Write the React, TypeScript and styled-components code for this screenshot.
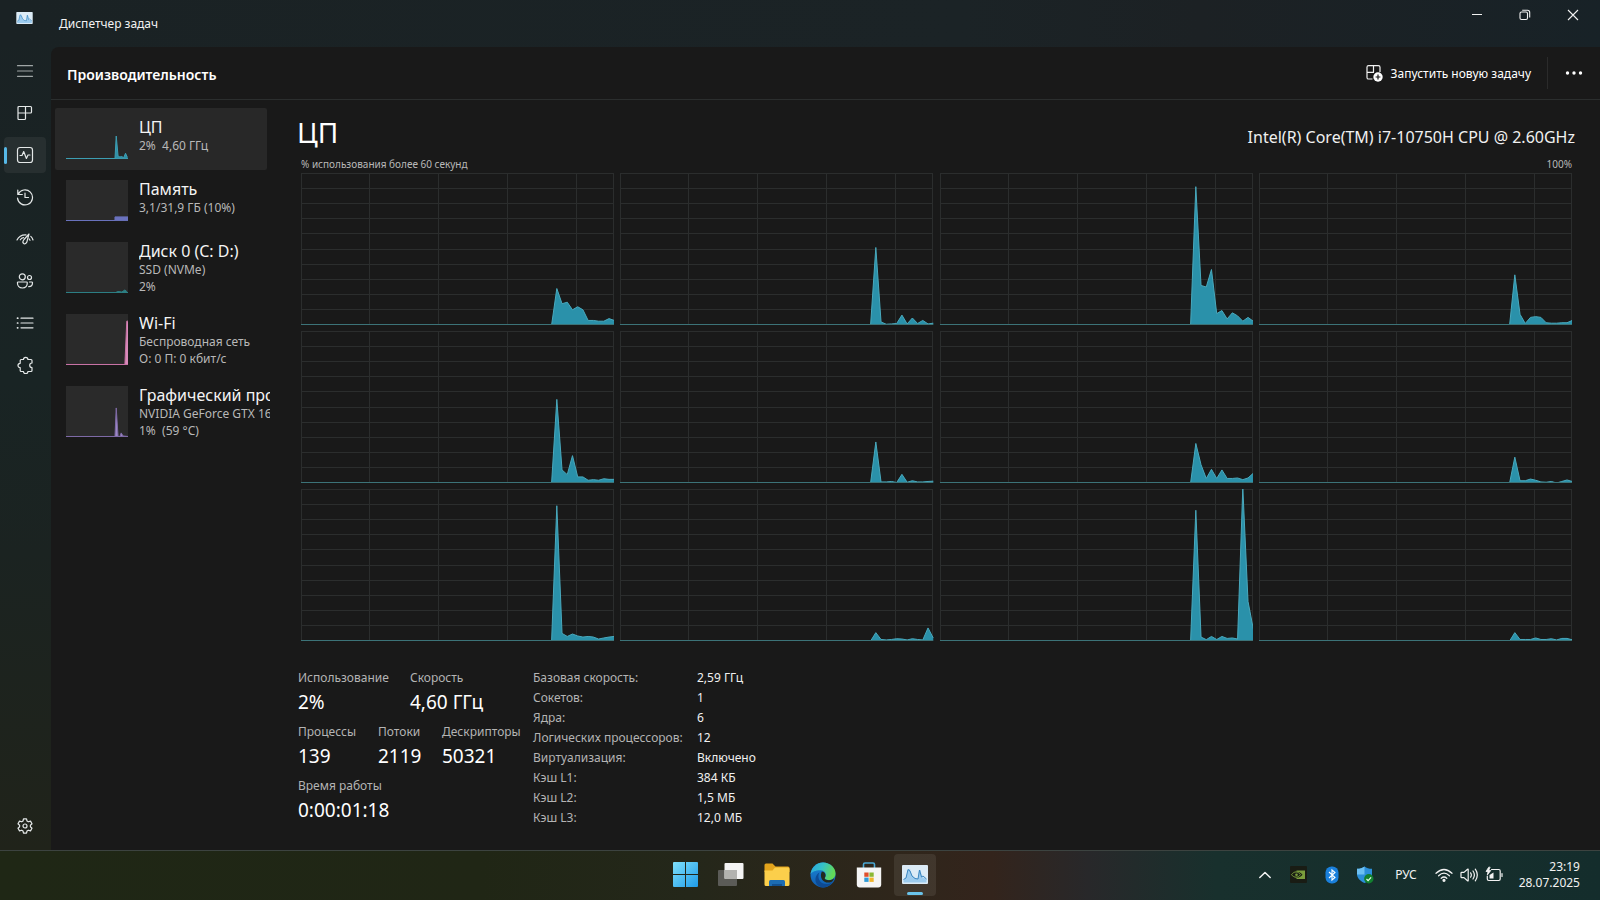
import React, { ReactNode } from 'react';
import styled, { createGlobalStyle } from 'styled-components';

const GlobalStyle = createGlobalStyle`
  * { box-sizing: border-box; }
  body {
    margin: 0;
    background: #191919;
    color: #f2f2f2;
    font-family: 'Noto Sans', 'Open Sans', sans-serif;
    font-size: 12px;
  }
  button {
    margin: 0;
    padding: 0;
    border: 0;
    background: none;
    color: inherit;
    font: inherit;
    text-align: left;
  }
  svg { display: block; }
  h1, h2, p, dl, dd, ul { margin: 0; padding: 0; font-weight: 400; }
  ul { list-style: none; }
`;

/* ---------- window frame ---------- */

const Desktop = styled.div`
  display: flex;
  flex-direction: column;
  min-height: 100vh;
`;

const Window = styled.div`
  flex: 1;
  display: flex;
  flex-direction: column;
  background:
    linear-gradient(90deg, #1a2224 0%, #1b2326 60%, #1c2124 75%, #182227 100%) top / 100% 47px no-repeat,
    linear-gradient(180deg, #1a2224 0%, #192424 45%, #1b2321 65%, #20231a 100%);
`;

const TitleBar = styled.header`
  display: flex;
  align-items: flex-start;
  height: 47px;
  padding: 0 3px 0 16px;
`;

const TitleIcon = styled.span`
  width: 43px;
  padding-top: 12px;
`;

const TitleText = styled.span`
  flex: 1;
  line-height: 20px;
  padding-top: 14px;
`;

const CaptionButton = styled.button`
  display: grid;
  place-items: center;
  width: 48px;
  height: 30px;
`;

const Body = styled.div`
  flex: 1;
  display: flex;
`;

const Rail = styled.nav`
  display: flex;
  flex-direction: column;
  gap: 6px;
  width: 51px;
  padding: 6px 5px 6px 4px;
`;

const RailButton = styled.button<{ $active?: boolean; $last?: boolean }>`
  position: relative;
  display: grid;
  place-items: center;
  height: 36px;
  border-radius: 4px;
  color: #e4e8e8;
  background: ${p => (p.$active ? '#272f30' : 'transparent')};
  margin-top: ${p => (p.$last ? 'auto' : '0')};
  &::before {
    content: '';
    display: ${p => (p.$active ? 'block' : 'none')};
    position: absolute;
    left: 0;
    top: 10px;
    width: 3px;
    height: 17px;
    border-radius: 2px;
    background: #56b8e6;
  }
`;

const Panel = styled.main`
  flex: 1;
  min-width: 0;
  background: #191919;
  border-top-left-radius: 8px;
`;

const PanelHeader = styled.div`
  display: flex;
  align-items: center;
  height: 53px;
  padding: 0 16px;
  border-bottom: 1px solid #2b2e2e;
`;

const PanelTitle = styled.h1`
  flex: 1;
  padding-top: 3px;
  font-size: 14px;
  font-weight: 600;
  line-height: 20px;
  color: #fff;
`;

const RunButton = styled.button`
  display: flex;
  align-items: center;
  gap: 8px;
  height: 32px;
  color: #fff;
`;

const Divider = styled.span`
  width: 1px;
  height: 32px;
  margin: 0 16px;
  background: #2b2b2b;
`;

const Columns = styled.div`
  display: flex;
`;

/* ---------- resource list ---------- */

const ResourceList = styled.ul`
  display: flex;
  flex-direction: column;
  flex: none;
  width: 246px;
  padding: 8px 0 0 4px;
`;

const Resource = styled.button<{ $active?: boolean; $tall?: boolean }>`
  display: flex;
  gap: 11px;
  width: 212px;
  height: ${p => (p.$tall ? 72 : 62)}px;
  padding: 9px 0 0 11px;
  border-radius: 2px;
  background: ${p => (p.$active ? '#282828' : 'transparent')};
`;

const Thumb = styled.svg<{ $tall?: boolean; $active?: boolean }>`
  flex: none;
  width: 62px;
  height: ${p => (p.$tall ? 51 : 41)}px;
  margin-top: 1px;
  background: ${p => (p.$active ? '#282828' : '#2a2a2a')};
`;

const ResourceText = styled.span`
  flex: none;
  width: 131px;
  overflow: hidden;
  white-space: nowrap;
`;

const ResourceName = styled.span`
  display: block;
  font-size: 16px;
  line-height: 20px;
  color: #f4f4f4;
`;

const ResourceInfo = styled.span`
  display: block;
  line-height: 17px;
  color: #b8b8b8;
  white-space: pre;
`;

/* ---------- details ---------- */

const Details = styled.section`
  flex: 1;
  min-width: 0;
  padding: 13px 25px 0 0;
`;

const DetailsHead = styled.div`
  display: flex;
  align-items: baseline;
  justify-content: space-between;
  line-height: 38px;
`;

const DetailsTitle = styled.h2`
  font-size: 28px;
  color: #fff;
`;

const Model = styled.p`
  font-size: 16px;
  color: #f0f0f0;
`;

const Scale = styled.div`
  display: flex;
  justify-content: space-between;
  padding: 0 3px 0 4px;
  font-size: 10px;
  line-height: 16px;
  color: #b8b8b8;
`;

const ChartGrid = styled.div`
  display: grid;
  grid-template-columns: repeat(4, 1fr);
  gap: 6px;
  padding: 1px 3px 0 4px;
`;

const Chart = styled.svg`
  width: 100%;
  height: 152px;
`;

const Facts = styled.div`
  display: flex;
  padding: 27px 0 0 1px;
`;

const Counters = styled.div`
  display: flex;
  flex-direction: column;
  gap: 6px;
  width: 235px;
`;

const CounterRow = styled.dl<{ $cols: string }>`
  display: grid;
  grid-template-columns: ${p => p.$cols};
`;

const CounterLabel = styled.dt`
  line-height: 20px;
  color: #b4b4b4;
`;

const CounterValue = styled.dd`
  font-size: 19px;
  line-height: 28px;
  color: #fff;
`;

const SpecTable = styled.table`
  border-collapse: collapse;
  align-self: flex-start;
  th, td {
    height: 20px;
    padding: 0;
    line-height: 20px;
    font-weight: 400;
    text-align: left;
  }
  th { width: 164px; color: #b4b4b4; }
  td { color: #f0f0f0; }
`;

/* ---------- taskbar ---------- */

const Taskbar = styled.footer`
  display: grid;
  grid-template-columns: 1fr auto 1fr;
  align-items: center;
  height: 50px;
  padding-bottom: 2px;
  border-top: 1px solid #3c4340;
  background: linear-gradient(90deg, #1f2715 0%, #202615 30%, #24271a 43%, #2f261b 56%, #33241c 62%, #28282a 68%, #18302d 76%, #142d2c 100%);
`;

const Apps = styled.div`
  grid-column: 2;
  display: flex;
  gap: 4px;
`;

const AppButton = styled.button<{ $active?: boolean }>`
  position: relative;
  display: grid;
  place-items: center;
  width: 42px;
  height: 42px;
  border-radius: 4px;
  background: ${p => (p.$active ? 'rgba(255, 255, 255, 0.08)' : 'transparent')};
  &::after {
    content: '';
    display: ${p => (p.$active ? 'block' : 'none')};
    position: absolute;
    left: 13px;
    bottom: 1px;
    width: 16px;
    height: 3px;
    border-radius: 2px;
    background: #6ac3ea;
  }
`;

const Tray = styled.div`
  display: flex;
  align-items: center;
  justify-content: flex-end;
  padding-right: 20px;
`;

const TrayButton = styled.button<{ $w: number }>`
  display: grid;
  place-items: center;
  width: ${p => p.$w}px;
  height: 40px;
`;

const Clock = styled.button`
  width: 74px;
  text-align: right;
  line-height: 16px;
`;

/* ---------- data ---------- */

const loads: number[][] = [
  [24, 14, 15, 10, 12, 10, 3, 3, 2.5, 2.5, 4.2, 3],
  [51, 2, 0.5, 0.7, 1, 6.5, 0.7, 4.6, 1, 3, 0.7, 1.2],
  [91, 26, 25, 36.5, 7.5, 9.5, 4, 8, 6, 2.5, 5, 2.5],
  [33, 7, 1, 5, 5.5, 5, 1.5, 1.2, 1.2, 1.5, 1.5, 3],
  [55, 8.6, 5.5, 18, 4, 4, 1.8, 2.2, 1.8, 2.8, 2.4, 2.4],
  [27, 0.7, 0.7, 1, 0.3, 5.7, 0.5, 1.5, 0.7, 0.7, 1, 1.2],
  [26, 12, 3, 9, 3, 8.6, 3, 3, 3.3, 2.2, 3.3, 6.4],
  [17, 1.5, 1.5, 2.6, 1.8, 0.7, 0.5, 1, 0, 1, 2, 1],
  [89, 5, 3, 4.6, 3.3, 2.6, 3, 2.6, 1.3, 2, 2.6, 3],
  [5.5, 1, 0.7, 1, 1.5, 1.3, 0.7, 1.5, 1, 0.7, 8.6, 2],
  [86, 2.6, 0.9, 3, 1, 3, 1.7, 2, 1.3, 101, 26, 8],
  [5.5, 1, 1, 1, 2, 1, 1, 1.5, 0.7, 1.7, 1.7, 0.8],
];

interface ResourceData {
  name: string;
  info: string[];
  color: string;
  fill: string;
  points: string;
}

const resources: ResourceData[] = [
  { name: 'ЦП', info: ['2%  4,60 ГГц'], color: '#3d9fb4', fill: '#2f91a8', points: '0,99 79,99 81,44 84,93 87,95 90,94 93,97 96,86 99,96' },
  { name: 'Память', info: ['3,1/31,9 ГБ (10%)'], color: '#6a72bd', fill: '#6a72bd', points: '0,99 79,99 79,90 100,90' },
  { name: 'Диск 0 (C: D:)', info: ['SSD (NVMe)', '2%'], color: '#2d7f83', fill: '#2d7f83', points: '0,99 80,99 84,97 90,98 95,94 98,97' },
  { name: 'Wi-Fi', info: ['Беспроводная сеть', 'О: 0 П: 0 кбит/с'], color: '#c873a5', fill: '#d98abb', points: '0,99 95,99 98,14 100,14' },
  { name: 'Графический процессор', info: ['NVIDIA GeForce GTX 1650', '1%  (59 °C)'], color: '#7f6ba6', fill: '#9d88c8', points: '0,99 79,99 81,43 84,99 87,99 89,92 92,98 100,99' },
];

const specs: [string, string][] = [
  ['Базовая скорость:', '2,59 ГГц'],
  ['Сокетов:', '1'],
  ['Ядра:', '6'],
  ['Логических процессоров:', '12'],
  ['Виртуализация:', 'Включено'],
  ['Кэш L1:', '384 КБ'],
  ['Кэш L2:', '1,5 МБ'],
  ['Кэш L3:', '12,0 МБ'],
];

const counters: { cols: string; items: [string, string][] }[] = [
  { cols: '112px auto', items: [['Использование', '2%'], ['Скорость', '4,60 ГГц']] },
  { cols: '80px 64px auto', items: [['Процессы', '139'], ['Потоки', '2119'], ['Дескрипторы', '50321']] },
  { cols: 'auto', items: [['Время работы', '0:00:01:18']] },
];

/* ---------- drawings ---------- */

const Line = ({ children, size = 18 }: { children: ReactNode; size?: number }) => (
  <svg width={size} height={size} viewBox="0 0 18 18" fill="none" stroke="currentColor" strokeWidth="1.2" strokeLinecap="round" strokeLinejoin="round">
    {children}
  </svg>
);

const CoreChart = ({ values }: { values: number[] }) => {
  const pts = ['48,100', ...values.map((v, i) => `${49 + i},${100 - v}`)].join(' ');
  return (
    <Chart viewBox="0 0 60 100" preserveAspectRatio="none">
      <g stroke="#2b2d2d" strokeWidth="1" shapeRendering="crispEdges">
        {[10, 20, 30, 40, 50, 60, 70, 80, 90].map(y => (
          <line key={y} x1="0" x2="60" y1={y} y2={y} vectorEffect="non-scaling-stroke" />
        ))}
        {[13.2, 26.4, 39.6, 52.8].map(x => (
          <line key={x} x1={x} x2={x} y1="0" y2="100" vectorEffect="non-scaling-stroke" />
        ))}
        <rect x="0.1" y="0.33" width="59.8" height="99.3" fill="none" vectorEffect="non-scaling-stroke" />
      </g>
      <polygon points={`${pts} 60,100`} fill="#2a91aa" />
      <polyline points={pts} fill="none" stroke="#49a9bd" strokeWidth="1" vectorEffect="non-scaling-stroke" />
      <line x1="0" x2="60" y1="99.6" y2="99.6" stroke="#3c7378" strokeWidth="1" shapeRendering="crispEdges" vectorEffect="non-scaling-stroke" />
    </Chart>
  );
};

const MonitorIcon = ({ w, h }: { w: number; h: number }) => (
  <svg width={w} height={h} viewBox="0 0 26 19">
    <rect width="26" height="19" rx="1" fill="#dcebf6" />
    <path d="M1.500 14.500 L4 13 L6 4.500 L8 4 L10 11 L13 13 L16 14 L17 5 L18.500 5 L20 12 L24.500 14 V17.500 H1.500 Z" fill="#9ccbee" />
    <path d="M1.500 14.500 L4 13 L6 4.500 L8 6 L10 11 L13 13.500 L16 14 L17.500 5 L19.500 12 L21 11 L24.500 14" fill="none" stroke="#3a86c0" strokeWidth="1" />
  </svg>
);

const railIcons: { label: string; icon: ReactNode }[] = [
  { label: 'Меню', icon: <Line><path d="M1.500 3.700h15M1.500 9h15M1.500 14.300h15" stroke="#a0a6a6" /></Line> },
  { label: 'Процессы', icon: <Line><path d="M3 2.500h11.500q1 0 1 1V8q0 1-1 1H9.500v5.500q0 1-1 1H3q-1 0-1-1v-11q0-1 1-1ZM2 9h7.500M9.500 2.500V9" /></Line> },
  { label: 'Производительность', icon: <Line><rect x="1.500" y="1.500" width="15" height="15" rx="2.500" /><path d="M4 9.500h2l1.700-4 2.700 7 1.600-3.500h2" /></Line> },
  { label: 'Журнал приложений', icon: <Line><path d="M1.800 2v4.500h4.500M2.200 6.200A7.500 7.500 0 1 1 1.500 10M9 5v4.500h3.500" /></Line> },
  { label: 'Автозагрузка', icon: <Line><path d="M1 10Q3.500 4.500 10 4.800M4.300 9.800q1.200-2 3.200-2.200M17 10q-.6-2.200-2.200-3.600M14 10.300l-.8-1.300M13 4 8 9.500q-2 2.600-.5 3.900t3.300-1.300Z" /></Line> },
  { label: 'Пользователи', icon: <Line><circle cx="6.300" cy="4.800" r="3" /><circle cx="13.500" cy="5.500" r="2" /><path d="M2.200 10h8.300q.8 0 .8.800c0 3-1.900 5.200-4.900 5.200s-5-2.200-5-5.200q0-.8.8-.8ZM13.500 10h2.200q.8 0 .8.800c0 2.500-1.400 3.900-3.800 3.900" /></Line> },
  { label: 'Подробности', icon: <Line><path d="M5 4.200h12M5 9h12M5 13.800h12" /><path d="M1.500 4.200h.3M1.500 9h.3M1.500 13.800h.3" strokeWidth="1.700" /></Line> },
  { label: 'Службы', icon: <Line><path d="M5.200 3.500H7.500a2.200 2.200 0 0 1 4.400 0H15q1 0 1 1V7a2.200 2.200 0 0 0 0 4.600V14.500q0 1-1 1H11.900a2.200 2.200 0 0 1-4.400 0H5.200q-1 0-1-1V11.700a2.200 2.200 0 0 1 0-4.400V4.500q0-1 1-1Z" /></Line> },
];

const GearIcon = () => (
  <Line>
    <circle cx="9" cy="9" r="2" />
    <path d="M7.500 1.800h3l.5 2.200 1.300.8 2.200-.7 1.500 2.600L14.400 8.200v1.600l1.600 1.500-1.500 2.600-2.200-.7-1.300.8-.5 2.200h-3L7 14l-1.300-.8-2.200.7L2 11.300l1.600-1.500V8.200L2 6.700l1.500-2.600 2.200.7L7 4Z" />
  </Line>
);

const StartIcon = () => (
  <svg width="25" height="25" viewBox="0 0 25 25">
    <defs>
      <linearGradient id="start" x1="0" y1="0" x2="1" y2="1">
        <stop offset="0" stopColor="#7fe0fb" />
        <stop offset="1" stopColor="#1e9be9" />
      </linearGradient>
    </defs>
    <path d="M1 0h11v12H0V1q0-1 1-1ZM13 0h11q1 0 1 1v11H13ZM0 13h12v12H1q-1 0-1-1ZM13 13h12v11q0 1-1 1H13Z" fill="url(#start)" />
  </svg>
);

const TaskViewIcon = () => (
  <svg width="26" height="24" viewBox="0 0 26 24">
    <rect x="0" y="7" width="19" height="16" rx="1" fill="#5b5b57" />
    <rect x="6.500" y="0" width="19" height="16" rx="1" fill="#f4f4f4" />
    <path d="M6.500 7H19v9H7.500q-1 0-1-1Z" fill="#b3b3b0" />
  </svg>
);

const FolderIcon = () => (
  <svg width="26" height="24" viewBox="0 0 26 24">
    <path d="M.5 2q0-1.500 1.500-1.500h6.500L11.500 3.500H24q1.500 0 1.500 1.500v4H.5Z" fill="#e3a41c" />
    <path d="M.5 7.500h8l2.500-3h13q1.500 0 1.500 1.500v15.500q0 1.500-1.500 1.500H2Q.5 23 .5 21.500Z" fill="#fbcf4b" />
    <path d="M5 23v-4.500q0-1.500 1.500-1.500h13q1.500 0 1.500 1.500V23Z" fill="#1c6cb2" />
    <path d="M8 23v-2h10v2Z" fill="#12508f" />
  </svg>
);

const EdgeIcon = () => (
  <svg width="26" height="26" viewBox="0 0 26 26">
    <defs>
      <linearGradient id="edge-top" x1="0" y1="0" x2="1" y2="0.3">
        <stop offset="0" stopColor="#2aa5e0" />
        <stop offset="0.5" stopColor="#35c1c8" />
        <stop offset="1" stopColor="#62d957" />
      </linearGradient>
      <linearGradient id="edge-side" x1="0" y1="0" x2="0" y2="1">
        <stop offset="0" stopColor="#1b87d6" />
        <stop offset="1" stopColor="#0f5cb0" />
      </linearGradient>
    </defs>
    <circle cx="13" cy="13" r="12.500" fill="url(#edge-side)" />
    <path d="M.5 12C1.500 5 7 .5 13 .5c7 0 12.500 5 12.500 11 0 4-3 6.500-6.500 6.500-3 0-4.800-1.300-4-2.500 2-2.300.8-7-4.500-7.300C6 8 2 9.800.5 12Z" fill="url(#edge-top)" />
    <path d="M9.500 10.500c-3 5 .5 12.300 8 11.500 2.500-.2 4.500-1.500 6-3-2.500 4-7 6.500-11 6.500-5-1-7.500-5-7-9 .3-2.500 1.800-4.800 4-6Z" fill="#0d4a94" />
    <path d="M11.800 9.500c3.500.5 4.700 4 3 6.300-.6 1.400 1.200 2.400 4.200 2.400 2 0 4-1 4.800-2 .5 1-1 3-2.500 3.800C15 22.500 8.500 17 11.800 9.500Z" fill="#232a1e" />
  </svg>
);

const StoreIcon = () => (
  <svg width="26" height="26" viewBox="0 0 26 26">
    <path d="M7.500 7V2.500q0-1.500 1.500-1.500h8q1.500 0 1.500 1.500V7" fill="none" stroke="#4aa8d4" strokeWidth="1.600" />
    <path d="M.8 5.500h24.400v17q0 3-3 3H3.800q-3 0-3-3Z" fill="#f5f5f5" />
    <path d="M8.300 10.500h4.300v4.300H8.300Z" fill="#e0502c" />
    <path d="M13.400 10.500h4.300v4.300h-4.300Z" fill="#8ab833" />
    <path d="M8.300 15.600h4.300v4.300H8.300Z" fill="#2f9bd8" />
    <path d="M13.400 15.600h4.300v4.300h-4.300Z" fill="#f0b52d" />
  </svg>
);

const ChevronIcon = () => (
  <svg width="14" height="10" viewBox="0 0 14 10" fill="none" stroke="#f2f2f2" strokeWidth="1.500" strokeLinecap="round" strokeLinejoin="round">
    <path d="M1.800 7.500 7 2.500l5.200 5" />
  </svg>
);

const NvidiaIcon = () => (
  <svg width="17" height="17" viewBox="0 0 17 17">
    <rect width="17" height="17" rx="1" fill="#191c14" />
    <path d="M6.500 4.500H15v8.500H6.500v-1.300c3 0 5-1.500 6-3-1.300-1.800-3.500-3-6-3Z" fill="#7a9e3c" />
    <path d="M1.500 8.700C4 5 8 5 10.500 8.700 8 12 4 12 1.500 8.700Z" fill="none" stroke="#7a9e3c" />
    <circle cx="6.500" cy="8.700" r="1.300" fill="#7a9e3c" />
  </svg>
);

const BluetoothIcon = () => (
  <svg width="14" height="18" viewBox="0 0 14 18">
    <rect x=".5" y=".5" width="13" height="17" rx="6" fill="#1a80dc" />
    <path d="M4 6l6 5.500L7 14V4l3 2.500L4 12" fill="none" stroke="#fff" strokeWidth="1.100" />
  </svg>
);

const ShieldIcon = () => (
  <svg width="18" height="18" viewBox="0 0 18 18">
    <path d="M8.500.5C10.500 2 13 2.800 16 2.800V8c0 4-3 7-7.500 9C4 15 1 12 1 8V2.800C4 2.800 6.500 2 8.500.5Z" fill="#2b8fd9" />
    <path d="M8.500.5V8.500H1V2.800C4 2.800 6.500 2 8.500.5Z" fill="#6cc0f2" />
    <circle cx="12.800" cy="12.800" r="4.700" fill="#12802f" />
    <path d="M10.500 13l1.600 1.600 3-3.200" fill="none" stroke="#e8ffe8" strokeWidth="1.200" />
  </svg>
);

const WifiIcon = () => (
  <Line>
    <path d="M1 7.300Q9-.3 17 7.300M3.600 9.800Q9 4.600 14.400 9.800M6.200 12.300Q9 9.700 11.800 12.300" />
    <circle cx="9" cy="14.300" r="1" fill="currentColor" />
  </Line>
);

const VolumeIcon = () => (
  <Line>
    <path d="M1 7v4q0 .6.600.6H4l3.500 3.200q.7.500.7-.4V3.600q0-.9-.7-.4L4 6.400H1.600Q1 6.400 1 7ZM10.600 6.800q1.500 2.200 0 4.400M13 5q2.800 4 0 8M15.300 3.200q4 5.800 0 11.600" />
  </Line>
);

const BatteryIcon = () => (
  <Line>
    <path d="M6.500 3.500h7.300q1.400 0 1.400 1.400v8.200q0 1.400-1.400 1.400H3.700q-1.400 0-1.400-1.400V10M17 7.500v3" />
    <path d="M4.500 12.500v-3.500l4-2.500V12.500Z" fill="currentColor" stroke="none" />
    <path d="M3.500 1.500 1 5.500h2L2.300 9 5.800 4.500H3.700L5 1.500Z" fill="currentColor" strokeWidth=".8" />
  </Line>
);

/* ---------- page ---------- */

const App = () => (
  <>
    <GlobalStyle />
    <Desktop>
      <Window>
        <TitleBar>
          <TitleIcon><MonitorIcon w={17} h={12} /></TitleIcon>
          <TitleText>Диспетчер задач</TitleText>
          <CaptionButton aria-label="Свернуть">
            <svg width="12" height="12" viewBox="0 0 12 12" stroke="#f2f2f2"><path d="M1 5.500h10" /></svg>
          </CaptionButton>
          <CaptionButton aria-label="Восстановить">
            <svg width="12" height="12" viewBox="0 0 12 12" fill="none" stroke="#f2f2f2" strokeWidth="1.100">
              <rect x="1" y="3" width="7.500" height="7.500" rx="1.500" />
              <path d="M3.200 1.200H8.500q2.200 0 2.200 2.200V8.500" />
            </svg>
          </CaptionButton>
          <CaptionButton aria-label="Закрыть">
            <svg width="12" height="12" viewBox="0 0 12 12" stroke="#f2f2f2" strokeWidth="1.100"><path d="M1 1l10 10M11 1 1 11" /></svg>
          </CaptionButton>
        </TitleBar>
        <Body>
          <Rail>
            {railIcons.map((r, i) => (
              <RailButton key={r.label} aria-label={r.label} $active={i === 2}>{r.icon}</RailButton>
            ))}
            <RailButton aria-label="Параметры" $last><GearIcon /></RailButton>
          </Rail>
          <Panel>
            <PanelHeader>
              <PanelTitle>Производительность</PanelTitle>
              <RunButton>
                <svg width="17" height="17" viewBox="0 0 17 17" fill="none" stroke="#f2f2f2" strokeWidth="1.200">
                  <path d="M6.500 14H2.600Q1 14 1 12.400V2.200Q1 .7 2.600.7h9.800Q14 .7 14 2.200V7M1 7.300h7M7.500.7v6.600" />
                  <circle cx="12" cy="12" r="4.700" fill="#fff" stroke="none" />
                  <path d="M12 9.600v4.800M9.600 12h4.800" stroke="#191919" />
                </svg>
                Запустить новую задачу
              </RunButton>
              <Divider />
              <button aria-label="Ещё">
                <svg width="20" height="20" viewBox="0 0 20 20" fill="#fff">
                  <circle cx="3.500" cy="10" r="1.700" /><circle cx="10" cy="10" r="1.700" /><circle cx="16.500" cy="10" r="1.700" />
                </svg>
              </button>
            </PanelHeader>
            <Columns>
              <ResourceList>
                {resources.map((r, i) => {
                  const tall = r.info.length > 1;
                  return (
                    <li key={r.name}>
                      <Resource $active={i === 0} $tall={tall}>
                        <Thumb $tall={tall} $active={i === 0} viewBox="0 0 100 100" preserveAspectRatio="none">
                          <polygon points={`${r.points} 100,99`} fill={r.fill} />
                          <polyline points={r.points} fill="none" stroke={r.color} vectorEffect="non-scaling-stroke" />
                          <line x1="0" x2="100" y1="99" y2="99" stroke={r.color} vectorEffect="non-scaling-stroke" />
                        </Thumb>
                        <ResourceText>
                          <ResourceName>{r.name}</ResourceName>
                          {r.info.map(t => <ResourceInfo key={t}>{t}</ResourceInfo>)}
                        </ResourceText>
                      </Resource>
                    </li>
                  );
                })}
              </ResourceList>
              <Details>
                <DetailsHead>
                  <DetailsTitle>ЦП</DetailsTitle>
                  <Model>Intel(R) Core(TM) i7-10750H CPU @ 2.60GHz</Model>
                </DetailsHead>
                <Scale><span>% использования более 60 секунд</span><span>100%</span></Scale>
                <ChartGrid>
                  {loads.map((v, i) => <CoreChart key={i} values={v} />)}
                </ChartGrid>
                <Facts>
                  <Counters>
                    {counters.map(row => (
                      <CounterRow key={row.cols} $cols={row.cols}>
                        {row.items.map(([label, value]) => (
                          <div key={label}>
                            <CounterLabel>{label}</CounterLabel>
                            <CounterValue>{value}</CounterValue>
                          </div>
                        ))}
                      </CounterRow>
                    ))}
                  </Counters>
                  <SpecTable>
                    <tbody>
                      {specs.map(([k, v]) => (
                        <tr key={k}><th scope="row">{k}</th><td>{v}</td></tr>
                      ))}
                    </tbody>
                  </SpecTable>
                </Facts>
              </Details>
            </Columns>
          </Panel>
        </Body>
      </Window>
      <Taskbar>
        <Apps>
          <AppButton aria-label="Пуск"><StartIcon /></AppButton>
          <AppButton aria-label="Представление задач"><TaskViewIcon /></AppButton>
          <AppButton aria-label="Проводник"><FolderIcon /></AppButton>
          <AppButton aria-label="Браузер"><EdgeIcon /></AppButton>
          <AppButton aria-label="Магазин"><StoreIcon /></AppButton>
          <AppButton aria-label="Диспетчер задач" $active><MonitorIcon w={26} h={19} /></AppButton>
        </Apps>
        <Tray>
          <TrayButton $w={33} aria-label="Скрытые значки"><ChevronIcon /></TrayButton>
          <TrayButton $w={34} aria-label="NVIDIA"><NvidiaIcon /></TrayButton>
          <TrayButton $w={34} aria-label="Bluetooth"><BluetoothIcon /></TrayButton>
          <TrayButton $w={32} aria-label="Безопасность"><ShieldIcon /></TrayButton>
          <TrayButton $w={50}>РУС</TrayButton>
          <TrayButton $w={25} aria-label="Сеть"><WifiIcon /></TrayButton>
          <TrayButton $w={25} aria-label="Громкость"><VolumeIcon /></TrayButton>
          <TrayButton $w={25} aria-label="Батарея"><BatteryIcon /></TrayButton>
          <Clock>23:19<br />28.07.2025</Clock>
        </Tray>
      </Taskbar>
    </Desktop>
  </>
);

export default App;
